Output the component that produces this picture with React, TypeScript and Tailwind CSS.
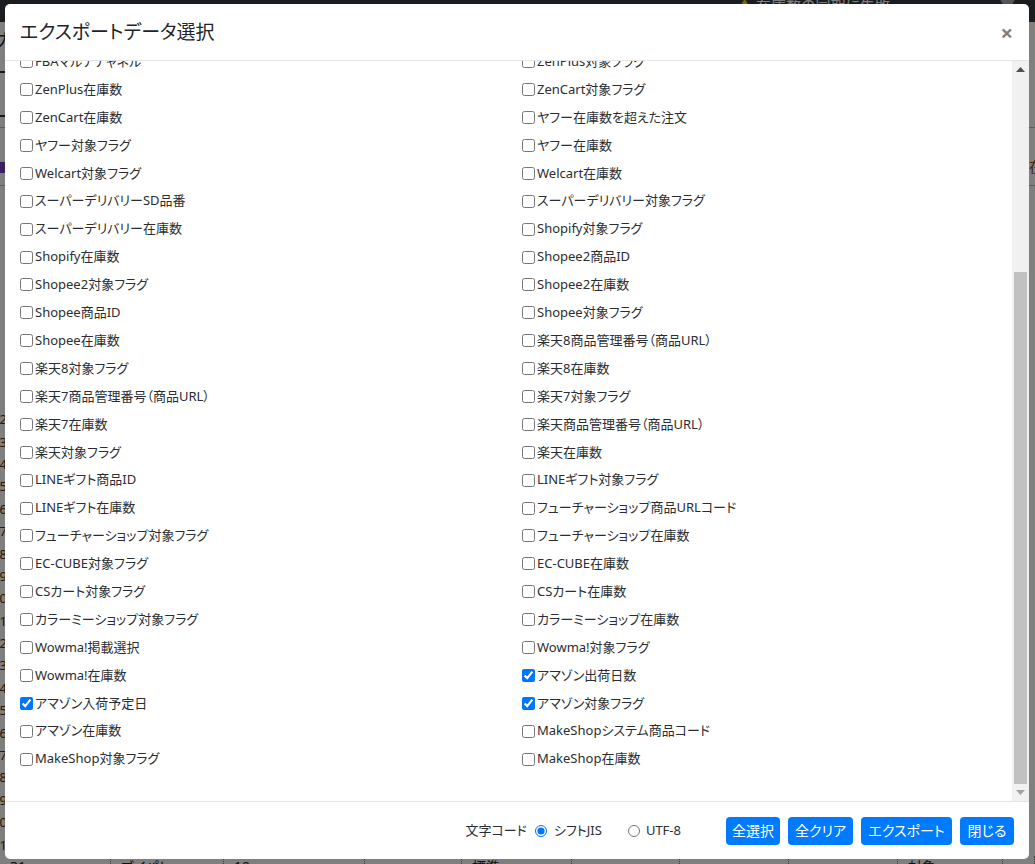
type Field = { label: string; checked?: boolean };

const f = (label: string, checked = false): Field => ({ label, checked });

// Export columns, listed row by row (left column, right column).
const rows: [Field, Field][] = [
  [f("FBA在庫数"), f("FBA対象フラグ")],
  [f("FBAマルチチャネル"), f("ZenPlus対象フラグ")],
  [f("ZenPlus在庫数"), f("ZenCart対象フラグ")],
  [f("ZenCart在庫数"), f("ヤフー在庫数を超えた注文")],
  [f("ヤフー対象フラグ"), f("ヤフー在庫数")],
  [f("Welcart対象フラグ"), f("Welcart在庫数")],
  [f("スーパーデリバリーSD品番"), f("スーパーデリバリー対象フラグ")],
  [f("スーパーデリバリー在庫数"), f("Shopify対象フラグ")],
  [f("Shopify在庫数"), f("Shopee2商品ID")],
  [f("Shopee2対象フラグ"), f("Shopee2在庫数")],
  [f("Shopee商品ID"), f("Shopee対象フラグ")],
  [f("Shopee在庫数"), f("楽天8商品管理番号（商品URL）")],
  [f("楽天8対象フラグ"), f("楽天8在庫数")],
  [f("楽天7商品管理番号（商品URL）"), f("楽天7対象フラグ")],
  [f("楽天7在庫数"), f("楽天商品管理番号（商品URL）")],
  [f("楽天対象フラグ"), f("楽天在庫数")],
  [f("LINEギフト商品ID"), f("LINEギフト対象フラグ")],
  [f("LINEギフト在庫数"), f("フューチャーショップ商品URLコード")],
  [f("フューチャーショップ対象フラグ"), f("フューチャーショップ在庫数")],
  [f("EC-CUBE対象フラグ"), f("EC-CUBE在庫数")],
  [f("CSカート対象フラグ"), f("CSカート在庫数")],
  [f("カラーミーショップ対象フラグ"), f("カラーミーショップ在庫数")],
  [f("Wowma!掲載選択"), f("Wowma!対象フラグ")],
  [f("Wowma!在庫数"), f("アマゾン出荷日数", true)],
  [f("アマゾン入荷予定日", true), f("アマゾン対象フラグ", true)],
  [f("アマゾン在庫数"), f("MakeShopシステム商品コード")],
  [f("MakeShop対象フラグ"), f("MakeShop在庫数")],
];

const lineNumbers = Array.from({ length: 20 }, (_, i) => i + 12);

// Cells of the stock table row peeking out under the dialog.
const tableCells: { w: string; text: string }[] = [
  { w: "w-[111px]", text: "31-" },
  { w: "w-[113px]", text: "ブイパト" },
  { w: "w-[141px]", text: "10pcs" },
  { w: "w-[97px]", text: "" },
  { w: "w-[110px]", text: "標準" },
  { w: "w-[108px]", text: "" },
  { w: "w-[109px]", text: "" },
  { w: "w-[109px]", text: "" },
  { w: "w-[105px]", text: "対象" },
  { w: "w-[32px]", text: "" },
];

function FieldCheck({ field }: { field: Field }) {
  return (
    <label className="flex h-[27.9px] items-center gap-[2px] text-[13px] text-[#2a2d31]">
      <input type="checkbox" defaultChecked={field.checked} className="h-[13px] w-[13px] shrink-0" />
      <span className="whitespace-nowrap">{field.label}</span>
    </label>
  );
}

function Button({ width, children }: { width: string; children: string }) {
  return (
    <button
      className={`${width} flex h-[28px] items-center justify-center rounded-[4px] bg-[#007bff] text-[14px] leading-none text-white`}
    >
      {children}
    </button>
  );
}

function ScrollArrow({ up, color }: { up: boolean; color: string }) {
  return (
    <div className="flex h-[17px] items-center justify-center">
      <svg width="9" height="5" viewBox="0 0 9 5">
        <path d={up ? "M0 5 L4.5 0 L9 5 Z" : "M0 0 L4.5 5 L9 0 Z"} fill={color} />
      </svg>
    </div>
  );
}

export default function App() {
  return (
    <div
      className="relative h-[864px] w-[1035px] overflow-hidden bg-white [font-feature-settings:'palt'] text-[#212529]"
      style={{ fontFamily: '"Noto Sans", "Noto Sans CJK JP", sans-serif' }}
    >
      {/* page underneath */}
      <div className="flex h-[864px] flex-col">
        <div className="flex h-[22px] shrink-0 items-start justify-end bg-[#343a40] pr-[20px] text-[15px] leading-[10px] text-white">
          <span className="mr-[4px] text-[#ffc107]">▲</span>
          <span className="mr-[110px]">在庫数の同期に失敗</span>
          <span className="text-[#aaa]">▼</span>
        </div>
        <div className="h-[50px]">
          <span className="ml-[-8px] inline-block pt-[6px] text-[18px] text-[#222]">ブ</span>
        </div>
        <div className="ml-[-10px] h-[46px] w-[120px] shrink-0 rounded-[6px] border-[2px] border-[#333]" />
        <div className="mt-[10px] h-px shrink-0 bg-[#bbb]" />
        <div className="flex justify-between">
          <div className="mt-[34px] h-[11px] w-[60px] bg-[#6f42c1]" />
          <div className="mr-[-8px] mt-[28px] text-[14px] text-[#7a4a00]">在</div>
        </div>
        <div className="mt-[8px] h-px shrink-0 bg-[#bbb]" />
        <div className="mt-[222px] flex flex-col">
          {lineNumbers.map((n) => (
            <div key={n} className="ml-[-8px] h-[22.4px] text-[13px] leading-[22px] text-[#5a2a10]">
              {n}
            </div>
          ))}
        </div>
        <div className="mb-[-14px] mt-auto flex h-[22px] shrink-0 text-[14px] leading-[22px] text-[#222]">
          {tableCells.map((c, i) => (
            <div key={i} className={`${c.w} border-r border-dotted border-[#777] pl-[10px]`}>
              {c.text}
            </div>
          ))}
        </div>
      </div>

      {/* backdrop */}
      <div className="absolute inset-0 bg-black/50" />

      {/* dialog */}
      <div className="absolute left-[5px] top-[4px] flex h-[855px] w-[1024px] flex-col overflow-hidden rounded-[5px] bg-white">
        <div className="flex h-[57px] shrink-0 items-center justify-between border-b border-[#e5e5e5] px-[15px]">
          <h5 className="text-[19px] font-normal leading-none text-[#212529]">エクスポートデータ選択</h5>
          <span className="mr-[1px] text-[22px] font-bold leading-none text-black opacity-50">×</span>
        </div>

        <div className="flex min-h-0 flex-1">
          {/* list, pinned to its end */}
          <div className="flex min-w-0 flex-1 flex-col justify-end overflow-hidden">
            <div className="grid shrink-0 grid-cols-[502px_1fr] px-[15px] pb-[28px]">
              {rows.map(([l, r], i) => [
                <FieldCheck key={`l${i}`} field={l} />,
                <FieldCheck key={`r${i}`} field={r} />,
              ])}
            </div>
          </div>

          {/* scrollbar */}
          <div className="flex w-[17px] shrink-0 flex-col bg-[#f1f1f1]">
            <ScrollArrow up color="#505050" />
            <div className="flex flex-1 flex-col justify-end">
              <div className="mx-auto h-[512px] w-[13px] bg-[#c1c1c1]" />
            </div>
            <ScrollArrow up={false} color="#a3a3a3" />
          </div>
        </div>

        <div className="flex h-[58px] shrink-0 items-center justify-end border-t border-[#e5e5e5] pr-[15px] text-[13px] text-[#2a2d31]">
          <span>文字コード</span>
          <label className="ml-[8px] flex items-center gap-[7px]">
            <input type="radio" name="enc" defaultChecked className="h-[12px] w-[12px]" />
            <span>シフトJIS</span>
          </label>
          <label className="ml-[26px] flex items-center gap-[6px]">
            <input type="radio" name="enc" className="h-[12px] w-[12px]" />
            <span>UTF-8</span>
          </label>
          <div className="ml-[45px] flex gap-[8px]">
            <Button width="w-[54px]">全選択</Button>
            <Button width="w-[65px]">全クリア</Button>
            <Button width="w-[91px]">エクスポート</Button>
            <Button width="w-[54px]">閉じる</Button>
          </div>
        </div>
      </div>
    </div>
  );
}
